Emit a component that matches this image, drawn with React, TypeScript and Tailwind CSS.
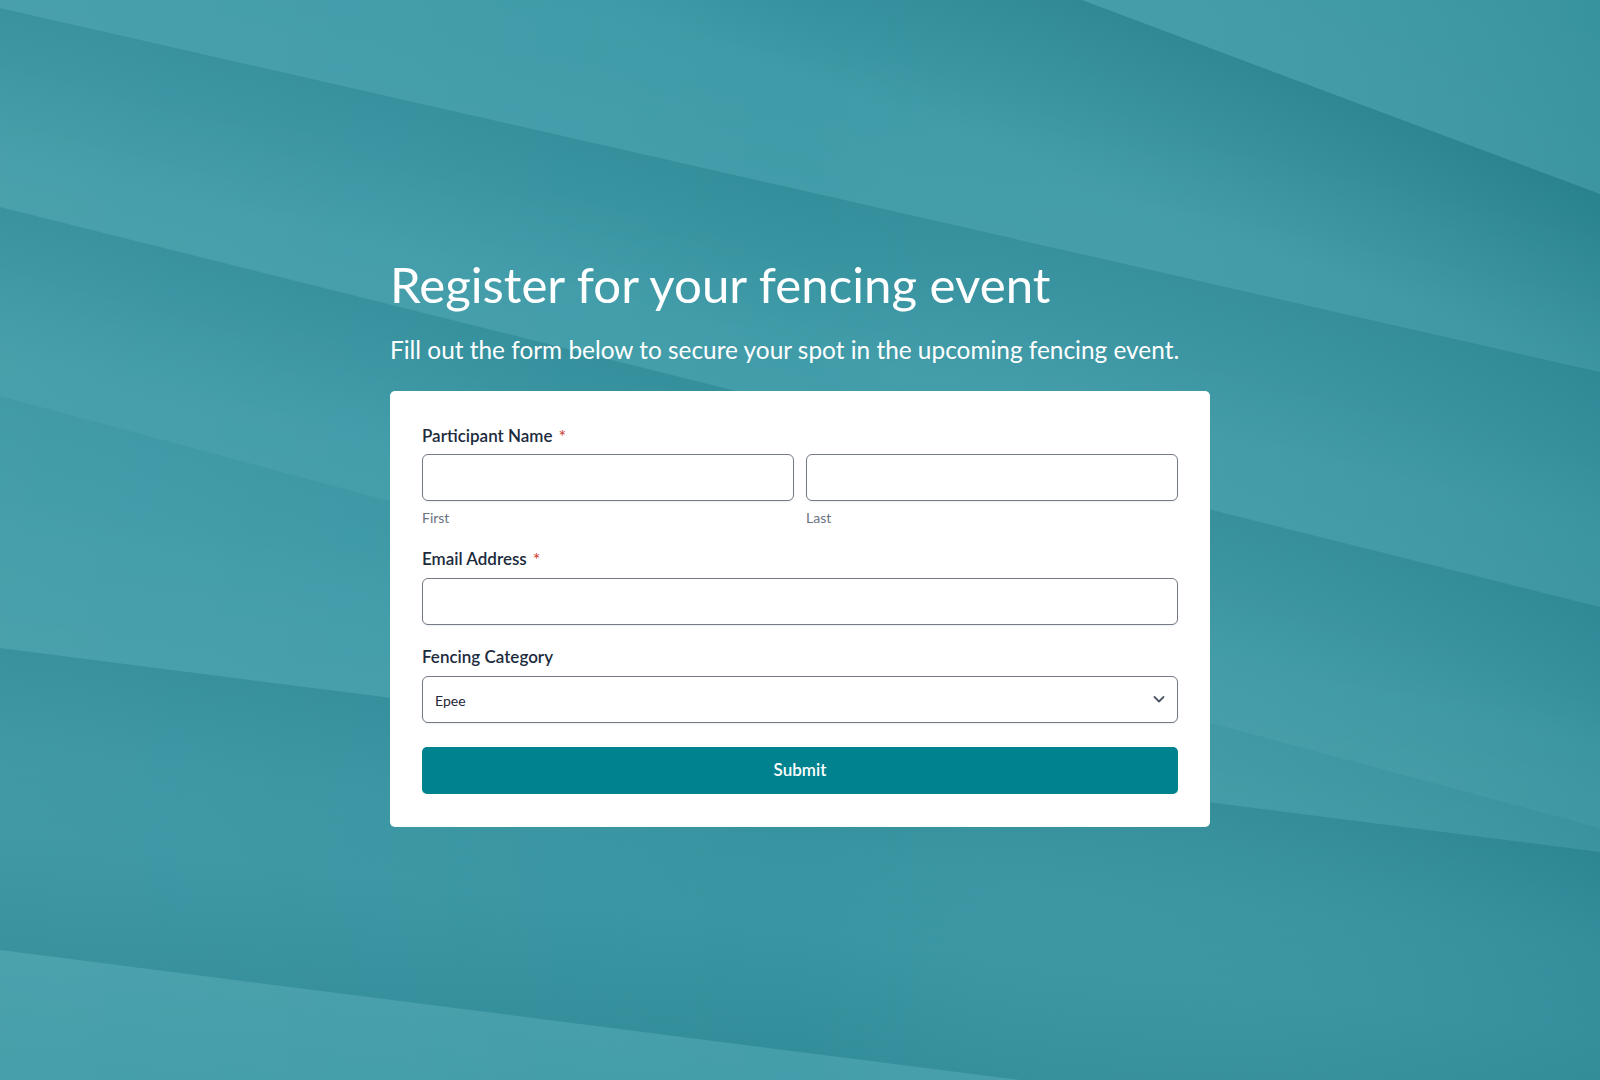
import React from "react";

type Line = { x1: number; y1: number; x2: number; y2: number; dark: number; depth: number; light: number; up?: boolean };

const raw: Line[] = [
  { x1: 1082, y1: 0, x2: 1600, y2: 194, dark: 0.5, depth: 170, light: 0.025 },
  { x1: 0, y1: 8, x2: 1600, y2: 372, dark: 0.3, depth: 150, light: 0.025 },
  { x1: 0, y1: 207, x2: 1600, y2: 607, dark: 0.3, depth: 140, light: 0.03 },
  { x1: 0, y1: 396, x2: 1600, y2: 828, dark: 0.1, depth: 110, light: 0.02 },
  { x1: 0, y1: 648, x2: 1600, y2: 852, dark: 0.33, depth: 180, light: 0.03 },
  { x1: 0, y1: 950, x2: 1600, y2: 1154, dark: 0.32, depth: 200, light: 0.04, up: true },
];

const lines = raw.map((l) => {
  const m = (l.y2 - l.y1) / (l.x2 - l.x1);
  const X1 = -1000;
  const X2 = 2600;
  return { ...l, x1: X1, y1: l.y1 + m * (X1 - l.x1), x2: X2, y2: l.y1 + m * (X2 - l.x1), mx: (l.x1 + l.x2) / 2, my: (l.y1 + l.y2) / 2 };
});

function Background() {
  return (
    <svg className="absolute inset-0 h-full w-full" viewBox="0 0 1600 1080" preserveAspectRatio="none">
      <defs>
        <linearGradient id="hz" x1="0" y1="0" x2="1" y2="0">
          <stop offset="0" stopColor="#ffffff" stopOpacity="0.04" />
          <stop offset="0.5" stopColor="#ffffff" stopOpacity="0" />
          <stop offset="1" stopColor="#0b5560" stopOpacity="0.1" />
        </linearGradient>
        {lines.map((l, i) => {
          const dx = l.x2 - l.x1;
          const dy = l.y2 - l.y1;
          const len = Math.hypot(dx, dy);
          let nx = -dy / len;
          let ny = dx / len;
          if (ny < 0) {
            nx = -nx;
            ny = -ny;
          }
          const s = l.up ? -1 : 1;
          return (
            <React.Fragment key={i}>
              <linearGradient
                id={`d${i}`}
                gradientUnits="userSpaceOnUse"
                x1={l.mx}
                y1={l.my}
                x2={l.mx + s * nx * l.depth}
                y2={l.my + s * ny * l.depth}
              >
                <stop offset="0" stopColor="#1b7380" stopOpacity={l.dark} />
                <stop offset="1" stopColor="#1b7380" stopOpacity="0" />
              </linearGradient>
              <linearGradient
                id={`l${i}`}
                gradientUnits="userSpaceOnUse"
                x1={l.mx}
                y1={l.my}
                x2={l.mx - s * nx * 160}
                y2={l.my - s * ny * 160}
              >
                <stop offset="0" stopColor="#ffffff" stopOpacity={l.light} />
                <stop offset="1" stopColor="#ffffff" stopOpacity="0" />
              </linearGradient>
            </React.Fragment>
          );
        })}
      </defs>
      <rect x="0" y="0" width="1600" height="1080" fill="#3d9aa7" />
      {lines.map((l, i) => {
        const H = 1400;
        const s = l.up ? -1 : 1;
        return (
          <g key={i}>
            <polygon
              points={`${l.x1},${l.y1} ${l.x2},${l.y2} ${l.x2},${l.y2 + s * H} ${l.x1},${l.y1 + s * H}`}
              fill={`url(#d${i})`}
            />
            <polygon
              points={`${l.x1},${l.y1} ${l.x2},${l.y2} ${l.x2},${l.y2 - s * H} ${l.x1},${l.y1 - s * H}`}
              fill={`url(#l${i})`}
            />
          </g>
        );
      })}
      <rect x="0" y="0" width="1600" height="1080" fill="url(#hz)" />
    </svg>
  );
}

function Label({ children, required }: { children: React.ReactNode; required?: boolean }) {
  return (
    <div className="flex items-center text-[17px] leading-[22px] font-semibold text-[#1c2b3d]">
      <span>{children}</span>
      {required && <span className="ml-[6px] text-[18px] leading-[16px] font-normal text-[#d03a2f]">*</span>}
    </div>
  );
}

function TextInput() {
  return (
    <input
      type="text"
      className="h-[47px] w-full rounded-[6px] border border-[#737985] bg-white px-3 text-[14px] shadow-[0_1px_2px_rgba(16,24,40,0.08)] outline-none"
    />
  );
}

export default function App() {
  return (
    <div className="relative flex h-screen w-full items-center justify-center overflow-hidden font-['Lato','Noto_Sans',sans-serif]">
      <Background />
      <div className="relative flex w-[820px] flex-col">
        <h1 className="text-[49.2px] leading-[60px] font-normal text-white">Register for your fencing event</h1>
        <p className="mt-5 text-[24.4px] leading-[32px] text-white">
          Fill out the form below to secure your spot in the upcoming fencing event.
        </p>
        <form className="mt-[25px] flex flex-col rounded-[5px] bg-white px-8 pt-[34px] pb-[33px]" onSubmit={(e) => e.preventDefault()}>
          <Label required>Participant Name</Label>
          <div className="mt-[7px] grid grid-cols-2 gap-3">
            <div className="flex flex-col">
              <TextInput />
              <span className="mt-2 text-[14px] leading-[18px] text-[#6b7280]">First</span>
            </div>
            <div className="flex flex-col">
              <TextInput />
              <span className="mt-2 text-[14px] leading-[18px] text-[#6b7280]">Last</span>
            </div>
          </div>
          <div className="mt-[21px]">
            <Label required>Email Address</Label>
          </div>
          <div className="mt-2">
            <TextInput />
          </div>
          <div className="mt-[21px]">
            <Label>Fencing Category</Label>
          </div>
          <div className="mt-2 flex h-[47px] w-full items-center justify-between rounded-[6px] border border-[#737985] bg-white pl-3 pr-3 shadow-[0_1px_2px_rgba(16,24,40,0.08)]">
            <span className="pt-[3px] text-[14px] text-[#1f2937]">Epee</span>
            <svg width="12" height="12" viewBox="0 0 12 12" fill="none">
              <path d="M1.5 4 L6 8.5 L10.5 4" stroke="#4b5563" strokeWidth="1.8" strokeLinecap="round" strokeLinejoin="round" />
            </svg>
          </div>
          <button
            type="submit"
            className="mt-6 h-[47px] w-full rounded-[5px] bg-[#00838f] text-[17px] font-semibold text-white"
          >
            Submit
          </button>
        </form>
      </div>
    </div>
  );
}
